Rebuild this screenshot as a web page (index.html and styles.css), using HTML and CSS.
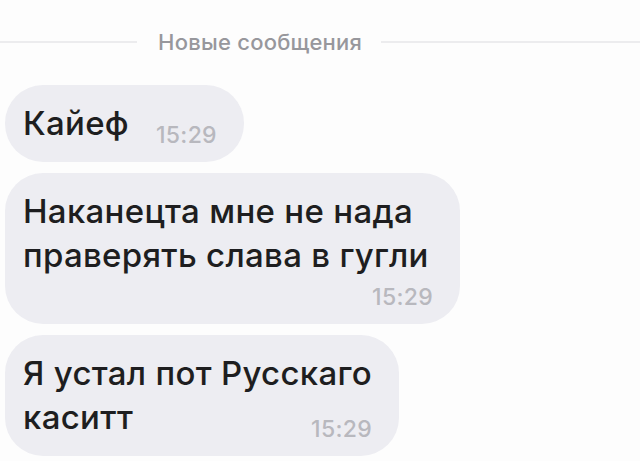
FILE: index.html
```html
<!DOCTYPE html>
<html lang="ru">
<head>
  <meta charset="UTF-8">
  <meta name="viewport" content="width=device-width, initial-scale=1.0">
  <link rel="stylesheet" href="styles.css">
</head>
<body>
  <div class="chat">
    <!-- Разделитель новых сообщений -->
    <div class="divider">
      <span class="divider-line divider-line-left"></span>
      <span class="divider-text">Новые сообщения</span>
      <span class="divider-line"></span>
    </div>

    <div class="message">
      <p class="message-text">Кайеф<span class="time">15:29</span></p>
    </div>

    <div class="message">
      <p class="message-text">Наканецта мне не нада<br>праверять слава в гугли<span class="time time-below">15:29</span></p>
    </div>

    <div class="message">
      <p class="message-text">Я устал пот Русскаго<br>каситт<span class="time">15:29</span></p>
    </div>
  </div>
</body>
</html>
```

FILE: styles.css
```css
/* Reset */
* {
  box-sizing: border-box;
}

body {
  margin: 0;
  background-color: #fdfdfd;
  font-family: 'Inter', 'Noto Sans', sans-serif;
  color: #1e1e20;
}

/* Lista de mensagens */
.chat {
  display: flex;
  flex-direction: column;
  align-items: flex-start;
  gap: 11px;
  padding-left: 5px;
}

/* Divisor "Новые сообщения" */
.divider {
  align-self: stretch;
  margin: 28px 0 18px -5px;
  height: 28px;
  display: flex;
  align-items: center;
}

.divider-line {
  flex: 1;
  height: 2px;
  background-color: #ececee;
}

.divider-line-left {
  flex: 0 0 137px;
}

.divider-text {
  padding: 0 19px 0 21px;
  font-size: 22px;
  font-weight: 500;
  letter-spacing: 0.25px;
  color: #97979c;
  white-space: nowrap;
}

/* Balão de mensagem */
.message {
  display: flow-root;
  max-width: 455px;
  padding: 16px 27px 15px 18px;
  background-color: #ededf2;
  border-radius: 38px;
}

.message-text {
  margin: 0;
  font-size: 33px;
  font-weight: 500;
  letter-spacing: 0.3px;
  line-height: 44px;
}

.time {
  float: right;
  margin: 22px 0 0 27px;
  font-size: 23px;
  font-weight: 500;
  letter-spacing: 0.3px;
  line-height: 24px;
  color: #b8b8be;
}

.time-below {
  margin-top: 8px;
}
```
